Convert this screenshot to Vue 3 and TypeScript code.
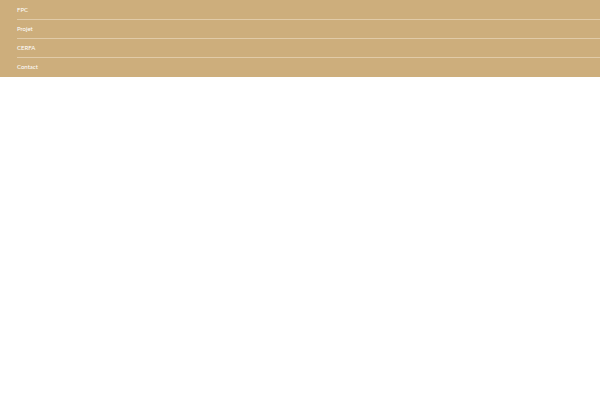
<script setup lang="ts">
interface NavItem {
  label: string
  href: string
}

const items: NavItem[] = [
  { label: 'FPC', href: '#fpc' },
  { label: 'Projet', href: '#projet' },
  { label: 'CERFA', href: '#cerfa' },
  { label: 'Contact', href: '#contact' },
]
</script>

<template>
  <nav class="menu">
    <ul class="menu-list">
      <li v-for="item in items" :key="item.href" class="menu-item">
        <a class="menu-link" :href="item.href">{{ item.label }}</a>
      </li>
    </ul>
  </nav>
</template>

<style>
body {
  margin: 0;
  background: #ffffff;
}
</style>

<style scoped>
.menu {
  background: #cdae7c;
  font-family: Lato, "Liberation Sans", sans-serif;
  font-size: 6px;
  line-height: 18px;
}

.menu-list {
  margin: 0;
  padding: 1px 0 1px 17px;
  list-style: none;
}

.menu-item + .menu-item {
  border-top: 1px solid #e1cba8;
}

.menu-link {
  display: block;
  color: #ffffff;
  text-decoration: none;
}
</style>
